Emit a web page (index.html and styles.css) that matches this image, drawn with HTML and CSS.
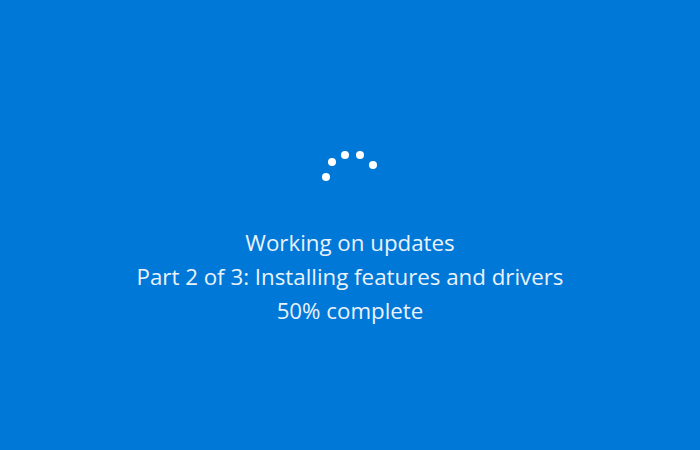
FILE: index.html
```html
<!DOCTYPE html>
<html>
<head>
    <title>Working on updates</title>
    <link rel="stylesheet" href="styles.css">
</head>
<body>
    <div class="update-screen">
        <svg class="spinner" width="64" height="40" viewBox="0 0 64 40">
            <circle cx="8" cy="27" r="4"/>
            <circle cx="14" cy="12" r="4"/>
            <circle cx="27" cy="5" r="4"/>
            <circle cx="42" cy="5" r="4"/>
            <circle cx="55" cy="15" r="4"/>
        </svg>
        <div class="status">
            <p>Working on updates</p>
            <p>Part 2 of 3: Installing features and drivers</p>
            <p>50% complete</p>
        </div>
    </div>
</body>
</html>
```

FILE: styles.css
```css
html, body {
    margin: 0;
    height: 100%;
}
body {
    background: #0078d7;
    font-family: "Open Sans", "Noto Sans", sans-serif;
    color: #eaf2fb;
}
.update-screen {
    display: flex;
    flex-direction: column;
    align-items: center;
    padding-top: 150px;
}
.spinner {
    display: block;
    fill: #ffffff;
}
.status {
    margin-top: 36px;
    text-align: center;
    font-size: 22.3px;
    line-height: 34px;
}
.status p {
    margin: 0;
}
```
